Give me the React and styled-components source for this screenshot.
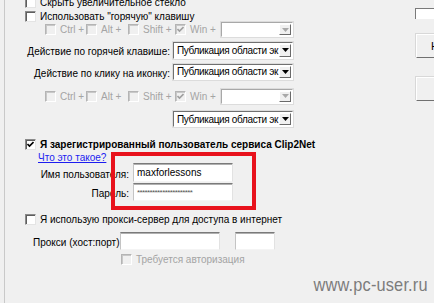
import React from 'react'
import styled, { createGlobalStyle } from 'styled-components'

const Global = createGlobalStyle`
  html, body { margin: 0; padding: 0; background: #f0f0f0; }
  body { font-family: "Liberation Sans", Arial, sans-serif; font-size: 10px; color: #000; }
`;

const Screen = styled.div`
  position: relative;
  width: 434px;
  height: 303px;
  overflow: hidden;
  background: #f0f0f0;
  display: flex;
`;

const Panel = styled.div`
  margin-left: 4px;
  width: 406px;
  flex-shrink: 0;
  border-left: 1px solid #c9c9c9;
  display: flex;
  flex-direction: column;
`;

const Inner = styled.div`
  margin-top: -6px;
  display: flex;
  flex-direction: column;
`;

const Row = styled.div`
  display: flex;
  align-items: center;
  height: ${p => p.$h}px;
  margin-top: ${p => p.$mt || 0}px;
  padding-left: ${p => p.$pl || 0}px;
  gap: ${p => p.$gap || 0}px;
  white-space: nowrap;
`;

const Box = styled.span`
  width: 11px;
  height: 11px;
  flex-shrink: 0;
  box-sizing: border-box;
  border-top: 1px solid #8a8a8a;
  border-left: 1px solid #8a8a8a;
  border-bottom: 1px solid #e4e4e4;
  border-right: 1px solid #e4e4e4;
  box-shadow: inset 1px 1px 0 #5e5e5e;
  background: ${p => (p.$disabled ? '#f0f0f0' : '#fff')};
  display: flex;
  align-items: center;
  justify-content: center;
  ${p => p.$disabled && 'border-color: #b4b4b4 #fff #fff #b4b4b4; box-shadow: inset 1px 1px 0 #c8c8c8;'}
`;

const Text = styled.span`
  color: ${p => (p.$disabled ? '#a4a4a4' : '#000')};
  font-weight: ${p => (p.$bold ? 700 : 400)};
`;

const Link = styled.a`
  color: #1c1cf0;
  text-decoration: underline;
  cursor: pointer;
`;

const Check = ({ checked, disabled, children, bold }) => (
  <>
    <Box $disabled={disabled}>
      {checked && (
        <svg width="7" height="7" viewBox="0 0 7 7">
          <path d="M0.5 3 L2.5 5 L6.5 1" fill="none" stroke={disabled ? '#a0a0a0' : '#000'} strokeWidth="1.6" />
        </svg>
      )}
    </Box>
    {children && <Text $disabled={disabled} $bold={bold}>{children}</Text>}
  </>
);

const KeyOpt = styled.span`
  width: ${p => p.$w}px;
  display: flex;
  align-items: center;
  gap: 4px;
`;

const Label = styled.span`
  width: ${p => p.$w}px;
  flex-shrink: 0;
  text-align: ${p => p.$align || 'right'};
  padding-top: 3px;
`;

const Combo = styled.div`
  width: ${p => p.$w}px;
  height: ${p => p.$h || 16}px;
  box-sizing: border-box;
  background: #fff;
  border-top: 1px solid ${p => (p.$disabled ? '#a8a8a8' : '#707070')};
  border-left: 1px solid ${p => (p.$disabled ? '#a8a8a8' : '#707070')};
  border-bottom: 1px solid #fff;
  border-right: 1px solid #fff;
  box-shadow: 0 0 0 1px #dcdcdc;
  display: flex;
  align-items: center;
  padding: 1px;
  overflow: hidden;
`;

const ComboText = styled.span`
  flex: 1;
  padding-left: 2px;
  overflow: hidden;
  white-space: nowrap;
  letter-spacing: -0.35px;
`;

const Arrow = styled.span`
  width: 12px;
  height: 100%;
  flex-shrink: 0;
  box-sizing: border-box;
  background: #f0f0f0;
  border-top: 1px solid #fff;
  border-left: 1px solid #fff;
  border-bottom: 1px solid #6a6a6a;
  border-right: 1px solid #6a6a6a;
  display: flex;
  align-items: center;
  justify-content: center;
`;

const Select = ({ w, h, disabled, value }) => (
  <Combo $w={w} $h={h} $disabled={disabled}>
    <ComboText>{value}</ComboText>
    <Arrow>
      <svg width="7" height="4" viewBox="0 0 7 4">
        <path d="M0 0 H7 L3.5 4 Z" fill={disabled ? '#a8a8a8' : '#000'} />
      </svg>
    </Arrow>
  </Combo>
);

const Field = styled.div`
  width: ${p => p.$w}px;
  height: ${p => p.$h}px;
  margin-left: ${p => p.$ml || 0}px;
  box-sizing: border-box;
  background: #fff;
  border-top: 1px solid #7a7a7a;
  border-left: 1px solid #c4c4c4;
  border-bottom: 1px solid #f4f4f4;
  border-right: 1px solid #e2e2e2;
  box-shadow: inset 0 1px 0 #b0b0b0;
  display: flex;
  align-items: center;
  padding-left: 3px;
  font-size: ${p => (p.$small ? 8 : 10)}px;
  color: ${p => (p.$small ? '#555' : '#000')};
  letter-spacing: ${p => (p.$small ? '-0.6px' : '0')};
  overflow: hidden;
  white-space: nowrap;
`;

const Side = styled.div`
  margin-left: 4px;
  width: 40px;
  flex-shrink: 0;
  display: flex;
  flex-direction: column;
`;

const SideField = styled.div`
  margin-top: 8px;
  height: 10px;
  background: #fff;
  border-top: 1px solid #7a7a7a;
  border-left: 1px solid #7a7a7a;
`;

const SideButton = styled.div`
  margin-top: ${p => p.$mt}px;
  margin-left: 1px;
  height: 24px;
  box-sizing: border-box;
  border-top: 1px solid #fff;
  border-left: 1px solid #fff;
  border-bottom: 1px solid #707070;
  background: #f0f0f0;
  box-shadow: -1px -1px 0 #d8d8d8;
  display: flex;
  align-items: center;
  padding-left: 14px;
  font-size: 11px;
`;

const Highlight = styled.div`
  position: absolute;
  left: 111px;
  top: 152px;
  width: 145px;
  height: 58px;
  box-sizing: border-box;
  border: 4px solid #e8121c;
  pointer-events: none;
`;

const Watermark = styled.div`
  position: absolute;
  right: 6px;
  top: 274px;
  font-family: "Liberation Sans Narrow", "Liberation Sans", Arial, sans-serif;
  font-size: 19px;
  color: #7c7c7c;
  transform: scaleX(0.86);
  transform-origin: right center;
  letter-spacing: 0.2px;
`;

const action = 'Публикация области эк'

const HotKeys = () => (
  <>
    <KeyOpt $w={41}><Check disabled>Ctrl +</Check></KeyOpt>
    <KeyOpt $w={42}><Check disabled>Alt +</Check></KeyOpt>
    <KeyOpt $w={47}><Check disabled>Shift +</Check></KeyOpt>
    <KeyOpt $w={46}><Check disabled checked>Win +</Check></KeyOpt>
    <Select w={72} h={15} disabled value="" />
  </>
);

export default function App() {
  return (
    <>
      <Global />
      <Screen>
        <Panel>
          <Inner>
            <Row $h={16} $pl={20} $gap={4}>
              <Check>Скрыть увеличительное стекло</Check>
            </Row>
            <Row $h={12} $pl={20} $gap={4}>
              <Check>Использовать "горячую" клавишу</Check>
            </Row>
            <Row $h={15} $pl={40}>
              <HotKeys />
            </Row>
            <Row $h={18} $mt={4} $gap={3}>
              <Label $w={165}>Действие по горячей клавише:</Label>
              <Select w={120} h={17} value={action} />
            </Row>
            <Row $h={17} $mt={4} $gap={3}>
              <Label $w={165}>Действие по клику на иконку:</Label>
              <Select w={120} h={16} value={action} />
            </Row>
            <Row $h={16} $mt={8} $pl={40}>
              <HotKeys />
            </Row>
            <Row $h={16} $mt={7} $pl={168}>
              <Select w={120} h={16} value={action} />
            </Row>
            <Row $h={12} $mt={11} $pl={20} $gap={4}>
              <Check checked bold>Я зарегистрированный пользователь сервиса Clip2Net</Check>
            </Row>
            <Row $h={12} $mt={1} $pl={33}>
              <Link>Что это такое?</Link>
            </Row>
            <Row $h={19} $gap={4}>
              <Label $w={124}>Имя пользователя:</Label>
              <Field $w={100} $h={19}>maxforlessons</Field>
            </Row>
            <Row $h={18} $mt={1} $gap={4}>
              <Label $w={124}>Пароль:</Label>
              <Field $w={100} $h={18} $small>**********************</Field>
            </Row>
            <Row $h={12} $mt={12} $pl={20} $gap={4}>
              <Check>Я использую прокси-сервер для доступа в интернет</Check>
            </Row>
            <Row $h={18} $mt={7} $pl={28}>
              <Label $w={87} $align="left">Прокси (хост:порт)</Label>
              <Field $w={100} $h={18} />
              <Field $w={40} $h={18} $ml={15} />
            </Row>
            <Row $h={12} $mt={3} $pl={116} $gap={4}>
              <Check disabled>Требуется авторизация</Check>
            </Row>
          </Inner>
        </Panel>
        <Side>
          <SideField />
          <SideButton $mt={15}>Н</SideButton>
          <SideButton $mt={19} />
        </Side>
        <Highlight />
        <Watermark>www.pc-user.ru</Watermark>
      </Screen>
    </>
  )
}
